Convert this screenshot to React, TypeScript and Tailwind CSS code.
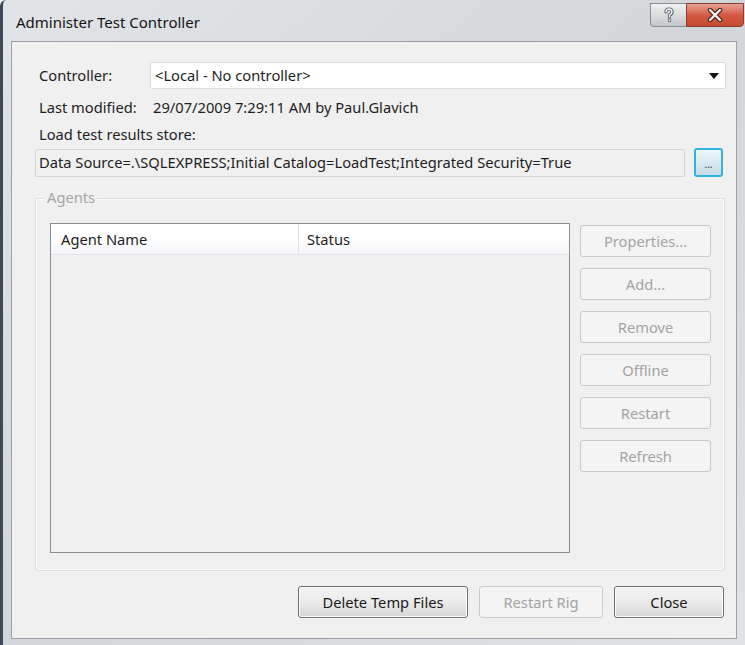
import React from "react";

const font = { fontFamily: '"Noto Sans", "Liberation Sans", sans-serif' };

function SideButton({ label }: { label: string }) {
  return (
    <div className="w-[131px] h-[32px] rounded-[3px] border border-[#c9c9c9] bg-[#f4f4f4] flex items-center justify-center text-[#a3a3a3]">
      {label}
    </div>
  );
}

function FooterButton({ label, width, disabled }: { label: string; width: string; disabled?: boolean }) {
  if (disabled) {
    return (
      <div className={`${width} h-[32px] shrink-0 rounded-[3px] border border-[#c9c9c9] bg-[#f4f4f4] flex items-center justify-center text-[#a3a3a3]`}>
        {label}
      </div>
    );
  }
  return (
    <div className={`${width} h-[32px] shrink-0 rounded-[3px] border border-[#707070] bg-gradient-to-b from-[#f3f3f3] via-[#ebebeb] to-[#d6d6d6] shadow-[inset_0_0_0_1px_#fcfcfc] flex items-center justify-center text-[#1a1a1a]`}>
      {label}
    </div>
  );
}

export default function App() {
  return (
    <div
      className="w-[745px] h-[645px] flex flex-col overflow-hidden rounded-tl-[6px] border-l-[3px] border-[#3b4a56] bg-gradient-to-br from-[#e2e5e8] via-[#d3d6d9] to-[#e0e2e4]"
      style={font}
    >
      {/* title bar */}
      <div className="h-[41px] flex items-start justify-between shrink-0">
        <div className="pl-[13px] pt-[11px] text-[15px] text-[#141414]">Administer Test Controller</div>
        <div className="flex pr-[1px] mt-[3px]">
          <div className="w-[36px] h-[24px] rounded-bl-[4px] border border-[#8a8f95] border-r-0 bg-gradient-to-b from-[#f0f1f2] via-[#dadcde] to-[#c4c7ca] flex items-center justify-center">
            <svg width="12" height="16" viewBox="0 0 12 16">
              <path d="M3 5 Q3 2 6 2 Q9 2 9 5 Q9 7 6.5 8 L6.5 10" fill="none" stroke="#4f5a66" strokeWidth="3.2" strokeLinecap="round" />
              <path d="M3 5 Q3 2 6 2 Q9 2 9 5 Q9 7 6.5 8 L6.5 10" fill="none" stroke="#f4f6f8" strokeWidth="1.4" strokeLinecap="round" />
              <rect x="4.9" y="11.6" width="3.2" height="3.2" fill="#4f5a66" />
              <rect x="5.6" y="12.3" width="1.8" height="1.8" fill="#f4f6f8" />
            </svg>
          </div>
          <div className="w-[58px] h-[24px] rounded-br-[4px] border border-[#8a3c30] bg-gradient-to-b from-[#e8a294] via-[#d35a44] to-[#c64a30] flex items-center justify-center">
            <svg width="18" height="14" viewBox="0 0 18 14">
              <path d="M4 2 L14 12 M14 2 L4 12" stroke="#4c2a26" strokeWidth="4.6" strokeLinecap="round" />
              <path d="M4 2 L14 12 M14 2 L4 12" stroke="#f6f0ef" strokeWidth="2.4" strokeLinecap="round" />
            </svg>
          </div>
        </div>
      </div>

      {/* client area */}
      <div className="ml-[8px] mr-[8px] h-[598px] shrink-0 border border-[#9aa0a6] bg-[#f0f0f0] flex flex-col text-[14.7px] text-[#1e1e1e]">
        {/* controller */}
        <div className="flex items-center mt-[20px] h-[27px]">
          <div className="w-[138px] shrink-0 pl-[27px]">Controller:</div>
          <div className="w-[576px] shrink-0 h-[27px] border border-[#dadada] rounded-[2px] bg-white flex items-center justify-between pl-[4px] pr-[6px]">
            <span>&lt;Local - No controller&gt;</span>
            <svg width="10" height="6" viewBox="0 0 10 6">
              <path d="M0 0 L10 0 L5 6 Z" fill="#111" />
            </svg>
          </div>
        </div>

        {/* last modified */}
        <div className="flex items-center mt-[8px] h-[20px] whitespace-nowrap">
          <div className="w-[141px] shrink-0 pl-[27px]">Last modified:</div>
          <div>29/07/2009 7:29:11 AM by Paul.Glavich</div>
        </div>

        <div className="pl-[27px] mt-[7px] h-[20px] flex items-center">Load test results store:</div>

        {/* connection string */}
        <div className="flex items-center mt-[4px] pl-[23px]">
          <div className="w-[650px] shrink-0 h-[28px] border border-[#d4d4d4] rounded-[2px] bg-[#f0f0f0] flex items-center pl-[3px] whitespace-nowrap overflow-hidden">
            Data Source=.\SQLEXPRESS;Initial Catalog=LoadTest;Integrated Security=True
          </div>
          <div className="ml-[9px] shrink-0 w-[29px] h-[29px] rounded-[3px] border-2 border-[#2fb6e0] bg-gradient-to-b from-[#eef7fb] to-[#c7dce6] flex items-end justify-center pb-[6px]">
            <span className="text-[10px] leading-none text-[#333]">...</span>
          </div>
        </div>

        {/* agents group */}
        <div className="relative mt-[21px] ml-[23px] w-[690px] h-[373px] rounded-[3px] border border-[#d5dfe5] shadow-[inset_0_0_0_1px_#fbfbfb]">
          <div className="absolute -top-[13px] left-[9px] px-[2px] bg-[#f0f0f0] text-[#a6a6a6]">Agents</div>
          <div className="flex mt-[24px] ml-[14px]">
            <div className="w-[520px] shrink-0 h-[330px] border border-[#8a8f96] bg-[#f0f0f0] flex flex-col">
              <div className="h-[31px] flex bg-gradient-to-b from-white via-white to-[#f3f4f6] border-b border-[#e3e4e6]">
                <div className="w-[248px] border-r border-[#e0e1e3] flex items-center pl-[10px]">Agent Name</div>
                <div className="flex items-center pl-[8px]">Status</div>
              </div>
            </div>
            <div className="ml-[10px] mt-[2px] flex flex-col gap-[11px]">
              <SideButton label="Properties..." />
              <SideButton label="Add..." />
              <SideButton label="Remove" />
              <SideButton label="Offline" />
              <SideButton label="Restart" />
              <SideButton label="Refresh" />
            </div>
          </div>
        </div>

        {/* footer buttons */}
        <div className="flex justify-end gap-[11px] mt-[15px] pr-[12px]">
          <FooterButton label="Delete Temp Files" width="w-[170px]" />
          <FooterButton label="Restart Rig" width="w-[124px]" disabled />
          <FooterButton label="Close" width="w-[110px]" />
        </div>
      </div>
    </div>
  );
}
